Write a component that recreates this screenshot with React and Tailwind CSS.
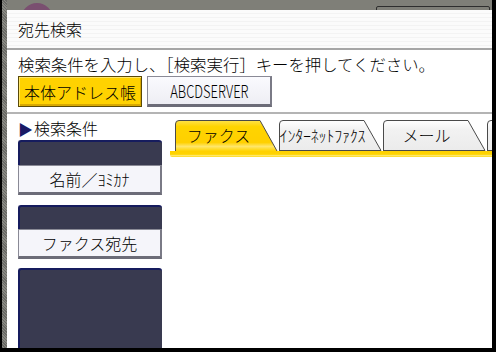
const jp = { fontFamily: '"Noto Sans CJK JP", "Noto Sans", sans-serif' }

function Tab({ label, active, textClass = '' }) {
  return (
    <div className="relative w-[103px] h-[31px] shrink-0">
      <svg width="103" height="31" className="absolute inset-0">
        <defs>
          <linearGradient id="tabY" x1="0" y1="0" x2="0" y2="1">
            <stop offset="0" stopColor="#ffe24a" />
            <stop offset="0.2" stopColor="#ffd400" />
            <stop offset="0.72" stopColor="#ffd000" />
            <stop offset="0.85" stopColor="#ffe66a" />
            <stop offset="1" stopColor="#ffd400" />
          </linearGradient>
          <linearGradient id="tabG" x1="0" y1="0" x2="0" y2="1">
            <stop offset="0" stopColor="#ffffff" />
            <stop offset="0.3" stopColor="#f2f2f2" />
            <stop offset="1" stopColor="#ebebeb" />
          </linearGradient>
        </defs>
        <path
          d={active ? 'M0.5,31 V4 Q0.5,0.5 4,0.5 H85 L102,31' : 'M0.5,31 V4 Q0.5,0.5 4,0.5 H85 L102,30.5 H0.5 Z'}
          fill={active ? 'url(#tabY)' : 'url(#tabG)'}
          stroke="#4a4a4a"
          strokeWidth="1"
        />
      </svg>
      {label && (
        <div
          className={`absolute inset-0 flex items-center justify-center pr-[16px] pb-[1px] text-black font-light ${textClass}`}
          style={jp}
        >
          {label}
        </div>
      )}
    </div>
  )
}

function SideButton({ label }) {
  return (
    <div
      className="h-[30px] flex items-center justify-center bg-[#f5f5fa] border border-[#8a8a96] border-b-[3px] border-b-[#6c6c78] border-r-2 border-r-[#7a7a86] text-[16px] font-light text-black"
      style={jp}
    >
      {label}
    </div>
  )
}

export default function App() {
  return (
    <div className="w-[496px] h-[352px] bg-black flex flex-col overflow-hidden" style={jp}>
      <div className="flex flex-1 min-h-0">
        {/* left textured strip */}
        <div className="w-[7px] border-l-2 border-black bg-[repeating-linear-gradient(45deg,#6a6a66_0px,#6a6a66_1px,#8a8a84_1px,#8a8a84_2px)]" />

        <div className="flex-1 flex flex-col min-w-0">
          {/* top background bar */}
          <div className="relative h-[10px] bg-[#7f7f78] overflow-hidden">
            <div className="absolute left-[14px] top-[3px] w-[32px] h-[32px] rounded-full bg-[#7a4f70]" />
            <div className="absolute left-[369px] top-[6px] w-[114px] h-[10px] rounded-t-[2px] border border-[#2e2e2e]" />
          </div>

          {/* white panel */}
          <div className="flex-1 flex flex-col bg-white min-h-0 font-light">
            {/* title */}
            <div className="h-[40px] shrink-0 flex items-center pl-[11px] border-b-2 border-[#a6a6a6] bg-[repeating-linear-gradient(180deg,#fbfbfb_0px,#fbfbfb_3px,#f3f3f3_3px,#f3f3f3_4px)]">
              <span className="text-[16px] text-black leading-none">宛先検索</span>
            </div>

            {/* instruction + source buttons */}
            <div className="pl-[11px] pt-[5px] shrink-0">
              <div className="text-[16.4px] leading-[18px] text-black whitespace-nowrap">
                検索条件を入力し、［検索実行］キーを押してください。
              </div>
              <div className="flex gap-[5px] mt-[3px]">
                <div className="w-[124px] h-[31px] flex items-center justify-center bg-[#ffd200] border border-[#5a4a08] shadow-[inset_1px_1px_0_#ffe66a,inset_-1px_-2px_0_#d8a800] text-[16px] text-black">
                  本体アドレス帳
                </div>
                <div className="w-[125px] h-[31px] flex items-center justify-center bg-gradient-to-b from-[#fafafe] to-[#eeeef4] border border-[#8a8a96] border-b-[3px] border-b-[#6c6c78] border-r-2 border-r-[#7a7a86]">
                  <span className="text-[18px] font-light text-black scale-x-[0.72] inline-block whitespace-nowrap">
                    ABCDSERVER
                  </span>
                </div>
              </div>
            </div>

            <div className="mt-[5px] border-t-2 border-[#b4b4b4] shrink-0" />

            {/* lower area */}
            <div className="flex-1 flex min-h-0 overflow-hidden">
              <div className="w-[144px] ml-[11px] flex flex-col shrink-0">
                <div className="h-[20px] mt-[4px] flex items-center text-[16px] text-black leading-none">
                  <span className="text-[#1a1a66] text-[15px] mr-[1px]">▶</span>検索条件
                </div>
                <div className="mt-[2px] h-[25px] bg-[#393a50] border-t-2 border-l-2 border-[#161c5e] rounded-t-[3px]" />
                <SideButton label="名前／ﾖﾐｶﾅ" />
                <div className="mt-[10px] h-[24px] bg-[#393a50] border-t-2 border-l-2 border-[#161c5e] rounded-t-[3px]" />
                <SideButton label="ファクス宛先" />
                <div className="mt-[9px] flex-1 bg-[#393a50] border-t-2 border-l-2 border-[#161c5e] rounded-t-[3px]" />
              </div>

              <div className="ml-[8px] flex-1 flex flex-col pt-[6px] min-w-0">
                <div className="flex gap-[1px] pl-[5px] overflow-hidden">
                  <Tab label="ファクス" active textClass="text-[16px]" />
                  <Tab label="ｲﾝﾀｰﾈｯﾄﾌｧｸｽ" textClass="text-[16px] tracking-[-0.2px] whitespace-nowrap pr-[14px]" />
                  <Tab label="メール" textClass="text-[16px]" />
                  <Tab />
                </div>
                <div className="h-[6px] rounded-bl-[2px] bg-[linear-gradient(180deg,#ffd000_0%,#ffd400_55%,#ffec80_80%,#ffd400_100%)]" />
              </div>
            </div>
          </div>
        </div>

        <div className="w-[4px] bg-black" />
      </div>
      <div className="h-[4px] bg-black shrink-0" />
    </div>
  )
}
